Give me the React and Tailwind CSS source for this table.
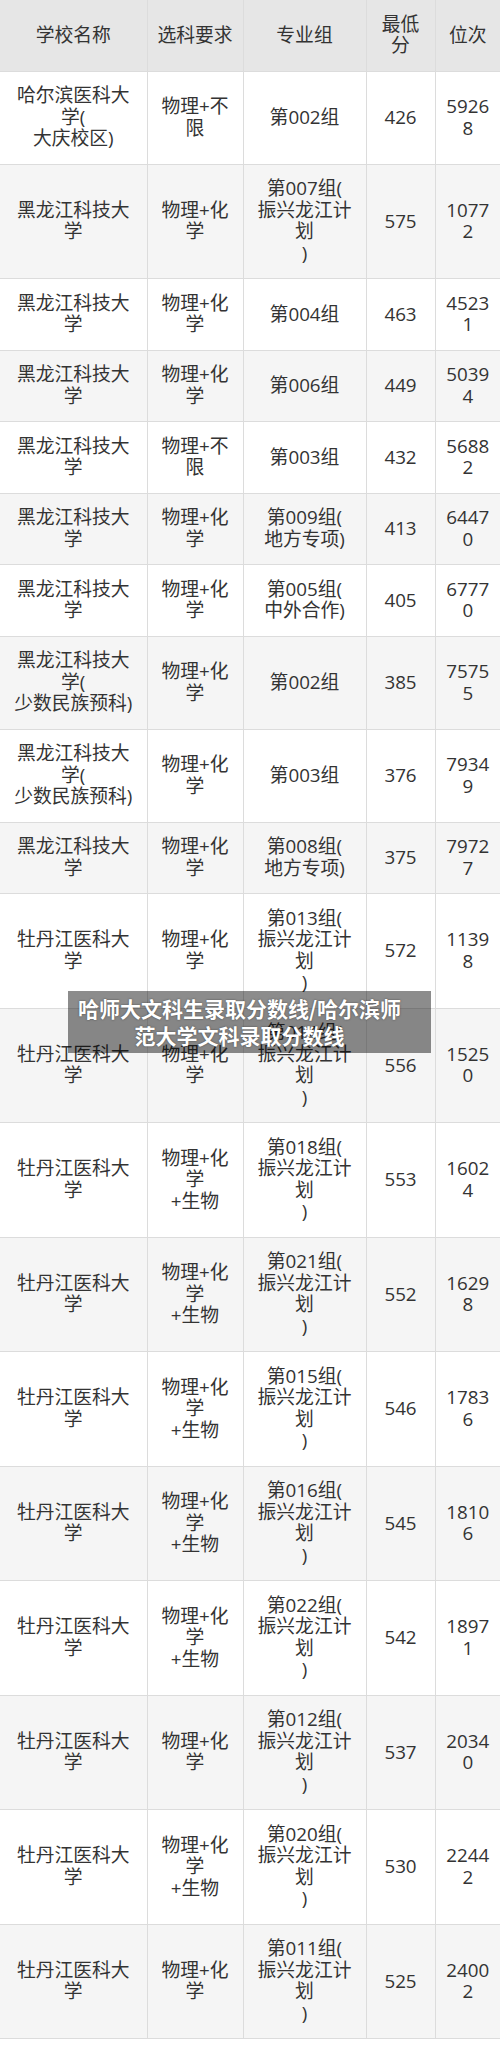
import React from "react";

const rows = [
  [["哈尔滨医科大", "学(", "大庆校区)"], ["物理+不", "限"], ["第002组"], "426", ["5926", "8"]],
  [["黑龙江科技大", "学"], ["物理+化", "学"], ["第007组(", "振兴龙江计", "划", ")"], "575", ["1077", "2"]],
  [["黑龙江科技大", "学"], ["物理+化", "学"], ["第004组"], "463", ["4523", "1"]],
  [["黑龙江科技大", "学"], ["物理+化", "学"], ["第006组"], "449", ["5039", "4"]],
  [["黑龙江科技大", "学"], ["物理+不", "限"], ["第003组"], "432", ["5688", "2"]],
  [["黑龙江科技大", "学"], ["物理+化", "学"], ["第009组(", "地方专项)"], "413", ["6447", "0"]],
  [["黑龙江科技大", "学"], ["物理+化", "学"], ["第005组(", "中外合作)"], "405", ["6777", "0"]],
  [["黑龙江科技大", "学(", "少数民族预科)"], ["物理+化", "学"], ["第002组"], "385", ["7575", "5"]],
  [["黑龙江科技大", "学(", "少数民族预科)"], ["物理+化", "学"], ["第003组"], "376", ["7934", "9"]],
  [["黑龙江科技大", "学"], ["物理+化", "学"], ["第008组(", "地方专项)"], "375", ["7972", "7"]],
  [["牡丹江医科大", "学"], ["物理+化", "学"], ["第013组(", "振兴龙江计", "划", ")"], "572", ["1139", "8"]],
  [["牡丹江医科大", "学"], ["物理+化", "学"], ["第014组(", "振兴龙江计", "划", ")"], "556", ["1525", "0"]],
  [["牡丹江医科大", "学"], ["物理+化", "学", "+生物"], ["第018组(", "振兴龙江计", "划", ")"], "553", ["1602", "4"]],
  [["牡丹江医科大", "学"], ["物理+化", "学", "+生物"], ["第021组(", "振兴龙江计", "划", ")"], "552", ["1629", "8"]],
  [["牡丹江医科大", "学"], ["物理+化", "学", "+生物"], ["第015组(", "振兴龙江计", "划", ")"], "546", ["1783", "6"]],
  [["牡丹江医科大", "学"], ["物理+化", "学", "+生物"], ["第016组(", "振兴龙江计", "划", ")"], "545", ["1810", "6"]],
  [["牡丹江医科大", "学"], ["物理+化", "学", "+生物"], ["第022组(", "振兴龙江计", "划", ")"], "542", ["1897", "1"]],
  [["牡丹江医科大", "学"], ["物理+化", "学"], ["第012组(", "振兴龙江计", "划", ")"], "537", ["2034", "0"]],
  [["牡丹江医科大", "学"], ["物理+化", "学", "+生物"], ["第020组(", "振兴龙江计", "划", ")"], "530", ["2244", "2"]],
  [["牡丹江医科大", "学"], ["物理+化", "学"], ["第011组(", "振兴龙江计", "划", ")"], "525", ["2400", "2"]],
];

function Lines({ v }) {
  const arr = Array.isArray(v) ? v : [v];
  return arr.map((t, i) => (
    <React.Fragment key={i}>
      {i > 0 && <br />}
      {t}
    </React.Fragment>
  ));
}

const cell =
  "px-0 py-[13.75px] text-center align-middle border-b border-[#dcdcdc] whitespace-nowrap";

export default function App() {
  const headers = [["学校名称"], ["选科要求"], ["专业组"], ["最低", "分"], ["位次"]];
  return (
    <div
      className="relative w-[500px] bg-white text-[#333333] text-[18.8px] leading-[21.5px]"
      style={{ fontFamily: '"Open Sans", "Noto Sans CJK SC", sans-serif' }}
    >
      <table className="w-[500px] table-fixed border-collapse">
        <colgroup>
          <col className="w-[147px]" />
          <col className="w-[96px]" />
          <col className="w-[123px]" />
          <col className="w-[69px]" />
          <col className="w-[65px]" />
        </colgroup>
        <thead>
          <tr className="bg-[#e6e6e6]">
            {headers.map((h, i) => (
              <th
                key={i}
                className={`${cell} font-normal ${i < 4 ? "border-r" : ""}`}
              >
                <Lines v={h} />
              </th>
            ))}
          </tr>
        </thead>
        <tbody>
          {rows.map((r, ri) => (
            <tr key={ri} className={ri % 2 === 1 ? "bg-[#f5f5f5]" : "bg-white"}>
              {r.map((c, ci) => (
                <td key={ci} className={`${cell} ${ci < 4 ? "border-r" : ""}`}>
                  <Lines v={c} />
                </td>
              ))}
            </tr>
          ))}
        </tbody>
      </table>
      <div className="absolute left-[68px] top-[991px] w-[363px] h-[62px] bg-black/45 flex items-center justify-center pr-[20px]">
        <div
          className="text-white font-bold text-[21px] leading-[27px] text-center whitespace-nowrap"
          style={{
            fontFamily: '"Noto Sans CJK SC", sans-serif',
            textShadow: "0 0 2px rgba(0,0,0,0.5)",
          }}
        >
          哈师大文科生录取分数线/哈尔滨师
          <br />
          范大学文科录取分数线
        </div>
      </div>
    </div>
  );
}
